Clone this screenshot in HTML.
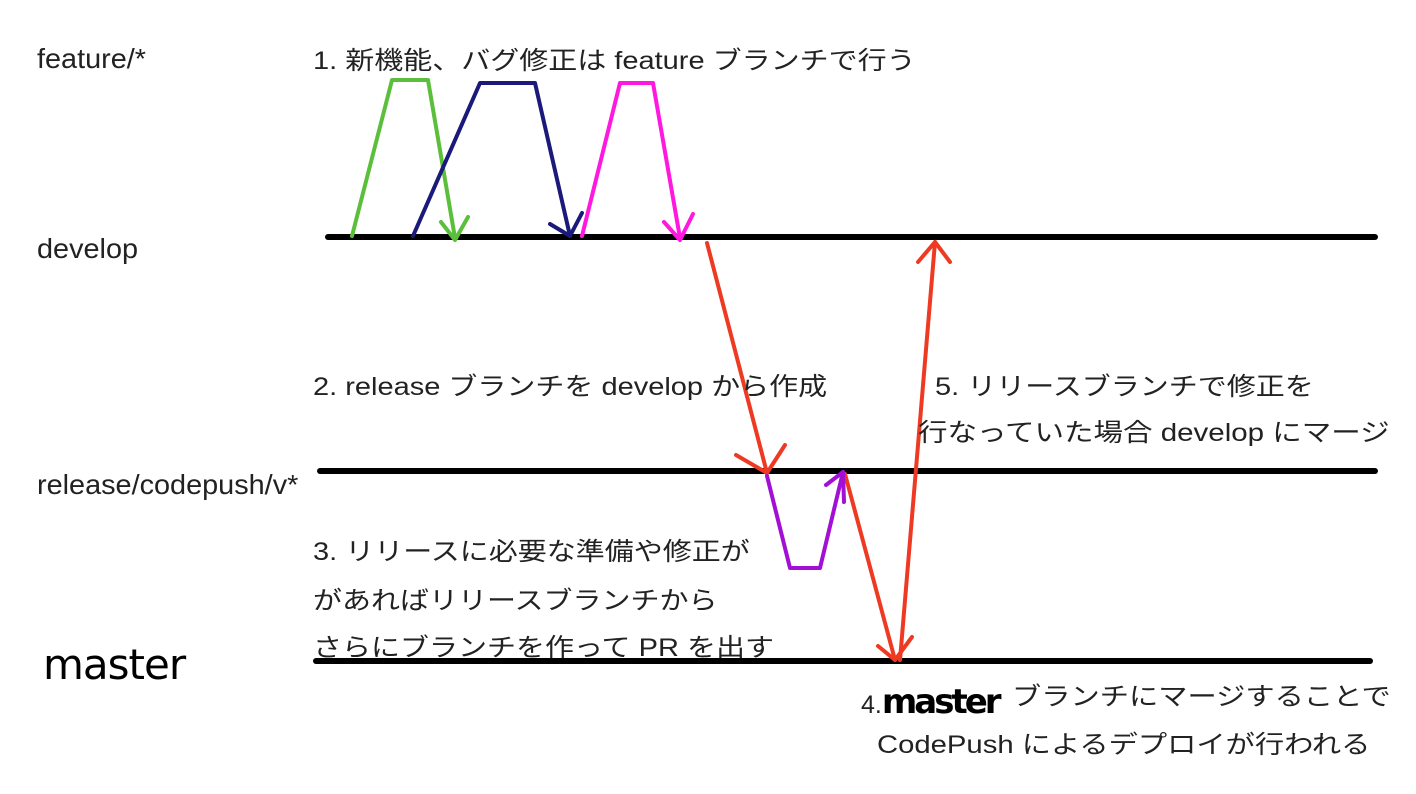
<!DOCTYPE html>
<html><head><meta charset="utf-8"><style>
html,body{margin:0;padding:0;background:#fff;}
body{width:1416px;height:794px;overflow:hidden;position:relative;font-family:"Liberation Sans","Noto Sans CJK JP",sans-serif;color:#222;}
.t{position:absolute;white-space:nowrap;font-size:25px;line-height:1;transform-origin:0 0;transform:scaleX(1.16);}
.l{position:absolute;white-space:nowrap;font-size:28px;line-height:1;transform-origin:0 0;transform:scaleX(1.03);}
.hw{font-family:"Comic Sans MS","DejaVu Sans",cursive;color:#000;letter-spacing:-1px;}
</style></head><body>
<svg width="1416" height="794" style="position:absolute;left:0;top:0" fill="none" stroke-linecap="round" stroke-linejoin="round">
<g stroke="#000" stroke-width="6">
<line x1="328" y1="237" x2="1375" y2="237"/>
<line x1="320" y1="471" x2="1375" y2="471"/>
<line x1="316" y1="661" x2="1370" y2="661"/>
</g>
<g stroke="#5bbf3c" stroke-width="4">
<polyline points="352,236 392,80 428,80 455,238"/>
<polyline points="441,222 455,240 468,217"/>
</g>
<g stroke="#1b1a7a" stroke-width="4">
<polyline points="413,236 480,83 535,83 570,236"/>
<polyline points="550,224 570,236 582,213"/>
</g>
<g stroke="#ff18e0" stroke-width="4">
<polyline points="582,236 620,83 653,83 680,238"/>
<polyline points="664,222 680,240 693,214"/>
</g>
<g stroke="#ee3a22" stroke-width="4">
<line x1="707" y1="243" x2="767" y2="473"/>
<polyline points="736,455 767,473 785,445"/>
<line x1="845" y1="474" x2="895" y2="660"/>
<polyline points="878,646 895,660 912,637"/>
<line x1="900" y1="660" x2="935" y2="242"/>
<polyline points="918,262 935,242 950,262"/>
</g>
<g stroke="#a210d6" stroke-width="4">
<polyline points="767,476 790,568 820,568 843,472"/>
<polyline points="826,485 843,472 844,502"/>
</g>
</svg>
<div class="l" style="left:37px;top:45px">feature/*</div>
<div class="l" style="left:37px;top:235px">develop</div>
<div class="l" style="left:37px;top:471px">release/codepush/v*</div>
<div class="hw" style="position:absolute;left:43px;top:644px;font-size:42px;line-height:1;font-weight:normal">master</div>
<div class="t" style="left:313px;top:49px">1. 新機能、バグ修正は feature ブランチで行う</div>
<div class="t" style="left:313px;top:375px">2. release ブランチを develop から作成</div>
<div class="t" style="left:935px;top:375px">5. リリースブランチで修正を</div>
<div class="t" style="left:918px;top:421px;transform:scaleX(1.18)">行なっていた場合 develop にマージ</div>
<div class="t" style="left:313px;top:540px">3. リリースに必要な準備や修正が</div>
<div class="t" style="left:313px;top:589px">があればリリースブランチから</div>
<div class="t" style="left:313px;top:636px">さらにブランチを作って PR を出す</div>
<div class="t" style="left:861px;top:685px;transform:none">4.<span class="hw" style="font-size:34px;font-weight:bold;letter-spacing:-3px">master</span></div>
<div class="t" style="left:1012px;top:685px;transform:scaleX(1.17)">ブランチにマージすることで</div>
<div class="t" style="left:877px;top:733px;transform:scaleX(1.17)">CodePush によるデプロイが行われる</div>
</body></html>
